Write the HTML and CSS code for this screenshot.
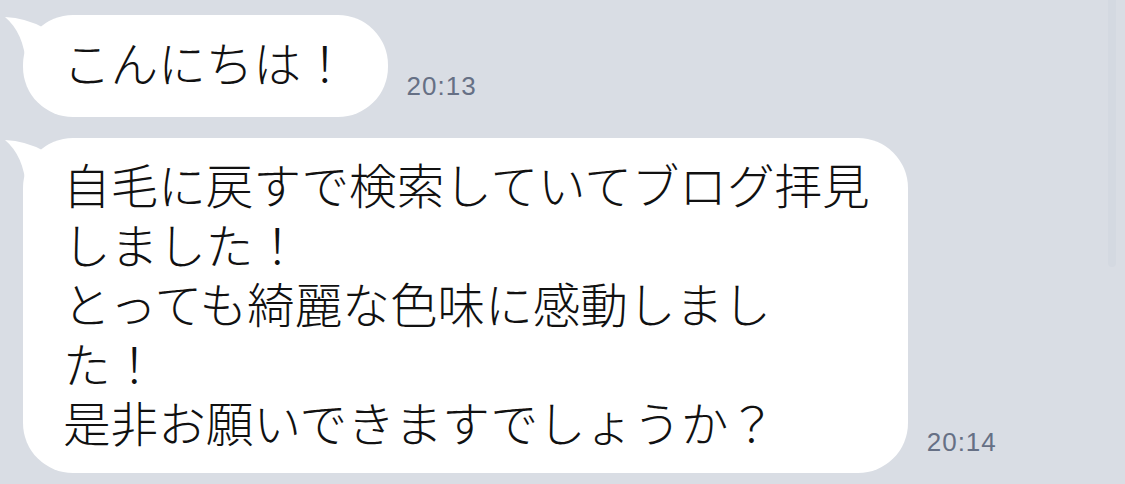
FILE: index.html
```html
<!DOCTYPE html>
<html lang="ja">
<head>
<meta charset="utf-8">
<link rel="stylesheet" href="styles.css">
</head>
<body>
<div class="chat">
  <div class="row row-first">
    <div class="bubble">
      <svg class="tail" width="44" height="50" viewBox="0 0 44 50"><path d="M1 2 Q22 3 40 13 L40 50 L22 50 Q20 18 1 2 Z" fill="#fff"/></svg>
      <p class="msg">こんにちは！</p>
    </div>
    <span class="time">20:13</span>
  </div>
  <div class="row">
    <div class="bubble bubble-long">
      <svg class="tail" width="44" height="50" viewBox="0 0 44 50"><path d="M1 2 Q22 3 40 13 L40 50 L22 50 Q20 18 1 2 Z" fill="#fff"/></svg>
      <p class="msg">自毛に戻すで検索していてブログ拝見<br>しました！<br>とっても綺麗な色味に感動しまし<br>た！<br>是非お願いできますでしょうか？</p>
    </div>
    <span class="time">20:14</span>
  </div>
  <div class="scrollbar"></div>
</div>
</body>
</html>
```
FILE: styles.css
```css
html, body {
  margin: 0;
  padding: 0;
  background: #d9dde4;
}
.chat {
  position: relative;
  width: 1125px;
  height: 484px;
  overflow: hidden;
  padding: 15px 0 0 23px;
  box-sizing: border-box;
  display: flex;
  flex-direction: column;
  gap: 21px;
}
.row {
  display: flex;
  align-items: flex-end;
  gap: 19px;
}
.bubble {
  position: relative;
  background: #fff;
  border-radius: 50px;
  padding: 17px 39px 25.5px 40px;
}
.bubble-long {
  padding: 16px 38px 21.5px 40px;
}
.tail {
  position: absolute;
  left: -19px;
  top: 0;
  display: block;
}
.msg {
  position: relative;
  margin: 0;
  font-family: "Noto Sans CJK JP", "Noto Sans", sans-serif;
  font-weight: 300;
  font-size: 47.6px;
  line-height: 59.5px;
  color: #111;
  white-space: nowrap;
}
.time {
  font-family: "Liberation Sans", Arial, sans-serif;
  font-size: 26px;
  letter-spacing: 1px;
  line-height: 26px;
  color: #667085;
  margin-bottom: 18px;
}
.scrollbar {
  position: absolute;
  right: 9px;
  top: 0;
  width: 8px;
  height: 267px;
  border-radius: 0 0 4px 4px;
  background: #d4d9e1;
}
```
